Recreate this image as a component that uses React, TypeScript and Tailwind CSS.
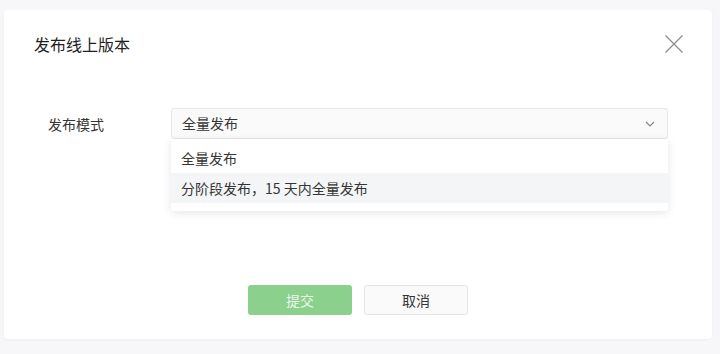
import { useState } from "react";

const OPTIONS = ["全量发布", "分阶段发布，15 天内全量发布"];

export default function App() {
  const [value] = useState(OPTIONS[0]);
  const [hovered, setHovered] = useState(1);

  return (
    <div
      className="h-[354px] w-[720px] overflow-hidden bg-[#f7f7f9] pl-[4px] pt-[10px]"
      style={{ fontFamily: '"Noto Sans CJK SC", "Noto Sans", sans-serif' }}
    >
      <div className="flex h-[329px] w-[708px] flex-col rounded-[4px] bg-white shadow-[0_1px_3px_rgba(0,0,0,0.04)]">
        {/* header */}
        <div className="flex items-center justify-between pl-[30px] pr-[28px] pt-[22px]">
          <h2 className="text-[16px] leading-[24px] text-[#1f1f1f]">发布线上版本</h2>
          <button className="flex h-[20px] w-[20px] items-center justify-center">
            <svg width="20" height="20" viewBox="0 0 20 20" fill="none">
              <path d="M1.5 1.5 L18.5 18.5 M18.5 1.5 L1.5 18.5" stroke="#8c8c8c" strokeWidth="1.2" />
            </svg>
          </button>
        </div>

        {/* form */}
        <div className="mt-[52px] flex items-center px-[44px]">
          <label className="w-[123px] text-[14px] leading-[30px] text-[#353535]">发布模式</label>
          <div className="relative flex-1">
            <div className="flex h-[31px] items-center justify-between rounded-[3px] border border-[#e7e7e7] bg-[#fafafa] pl-[10px] pr-[12px]">
              <span className="text-[14px] text-[#353535]">{value}</span>
              <svg width="10" height="6" viewBox="0 0 10 6" fill="none">
                <path d="M1 1 L5 5 L9 1" stroke="#8a8a8a" strokeWidth="1.2" />
              </svg>
            </div>
            <ul className="absolute left-0 right-0 top-[31px] z-10 rounded-b-[3px] bg-white pb-[8px] pt-[4px] shadow-[0_2px_8px_rgba(0,0,0,0.1)]">
              {OPTIONS.map((opt, i) => (
                <li
                  key={opt}
                  onMouseEnter={() => setHovered(i)}
                  className={
                    "flex h-[30px] items-center px-[10px] text-[14px] text-[#353535] " +
                    (hovered === i ? "bg-[#f4f5f6]" : "")
                  }
                >
                  {opt}
                </li>
              ))}
            </ul>
          </div>
        </div>

        {/* footer */}
        <div className="mt-auto flex justify-center gap-[12px] pb-[24px]">
          <button className="h-[30px] w-[104px] rounded-[3px] bg-[#8bd08c] text-[14px] text-[#e9f7e9]">
            提交
          </button>
          <button className="h-[30px] w-[104px] rounded-[3px] border border-[#e5e5e5] bg-[#fafafa] text-[14px] text-[#353535]">
            取消
          </button>
        </div>
      </div>
    </div>
  );
}
